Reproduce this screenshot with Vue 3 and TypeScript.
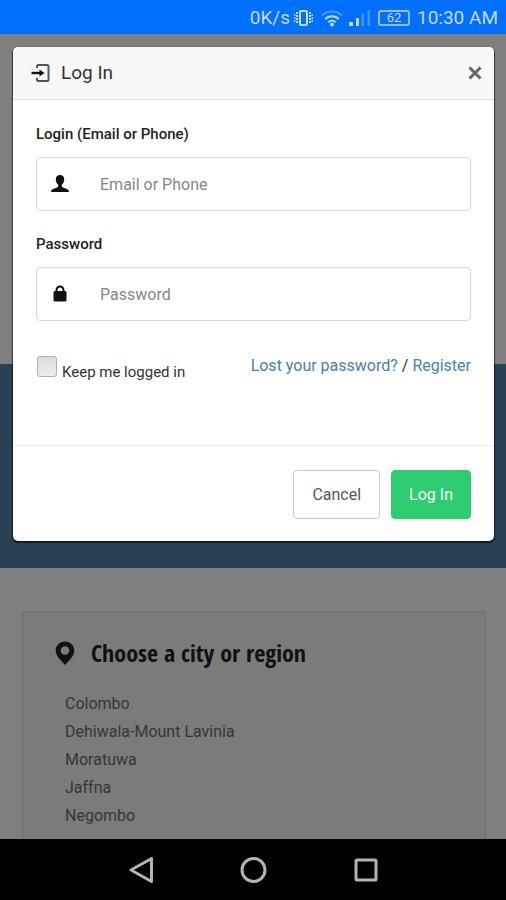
<script setup lang="ts">
import { ref } from 'vue'

const login = ref('')
const password = ref('')
const keepLoggedIn = ref(false)
const open = ref(true)

const cities: string[] = ['Colombo', 'Dehiwala-Mount Lavinia', 'Moratuwa', 'Jaffna', 'Negombo']

function close(): void {
  open.value = false
}
</script>

<template>
  <div class="screen">
    <header class="status">
      <span class="speed">0K/s</span>
      <svg class="vibrate" width="19" height="18" viewBox="0 0 19 18" aria-hidden="true">
        <rect x="6" y="2" width="7" height="14" rx="1" fill="none" stroke="currentColor" stroke-width="2" />
        <path d="M3 3v12M16 3v12" fill="none" stroke="currentColor" stroke-width="2" stroke-dasharray="2 1" />
        <path d="M.8 5v8M18.200 5v8" fill="none" stroke="currentColor" stroke-width="1.200" stroke-dasharray="2 1" />
      </svg>
      <svg class="wifi" width="22" height="18" viewBox="0 0 22 18" aria-hidden="true">
        <g fill="none" stroke="currentColor" stroke-width="2">
          <path d="M1 6.500a14.200 14.200 0 0 1 20 0" opacity=".4" />
          <path d="M4.200 10a9.600 9.600 0 0 1 13.600 0" />
          <path d="M7.400 13.200a5.100 5.100 0 0 1 7.200 0" />
        </g>
        <circle cx="11" cy="15.500" r="2" fill="currentColor" />
      </svg>
      <svg class="signal" width="22" height="18" viewBox="0 0 22 18" aria-hidden="true">
        <g fill="currentColor">
          <rect x="0" y="13" width="4" height="4" rx="1" />
          <rect x="7" y="9" width="3" height="8" />
          <rect x="12.500" y="4.500" width="2.500" height="12.500" opacity=".35" />
          <rect x="18.500" y="1" width="2.500" height="16" opacity=".35" />
        </g>
      </svg>
      <span class="battery">62</span>
      <span class="clock">10:30 AM</span>
    </header>

    <main class="content">
      <div class="page">
        <div class="hero"></div>
        <section class="region">
          <h2 class="region-title">
            <svg width="20" height="24" viewBox="0 0 20 24" aria-hidden="true">
              <path fill="currentColor" fill-rule="evenodd" d="M10 .5C4.600.5.700 4.500.700 9.500c0 4 2.300 6.500 4.900 9.700L10 24l4.400-4.800c2.600-3.200 4.900-5.700 4.900-9.700C19.300 4.500 15.400.5 10 .5zM10 5.200a4.300 4.300 0 1 1 0 8.600 4.300 4.300 0 0 1 0-8.600z" />
            </svg>
            Choose a city or region
          </h2>
          <ul class="cities">
            <li v-for="city in cities" :key="city"><a href="#">{{ city }}</a></li>
          </ul>
        </section>
      </div>

      <div v-if="open" class="overlay">
        <form class="modal" role="dialog" aria-labelledby="modal-title" @submit.prevent="close">
          <div class="modal-head">
            <svg width="20" height="20" viewBox="0 0 20 20" aria-hidden="true">
              <path d="M6 5V3.500Q6 2 7.500 2H16q1.500 0 1.500 1.500v13q0 1.500-1.500 1.500H7.500Q6 18 6 16.500V15" fill="none" stroke="#555" stroke-width="2" />
              <path d="M.5 10h10" fill="none" stroke="#111" stroke-width="2.400" />
              <path d="M8.500 6.500l5 3.500-5 3.500z" fill="#111" />
            </svg>
            <h1 id="modal-title">Log In</h1>
            <button type="button" class="close" aria-label="Close" @click="close">
              <svg width="14" height="14" viewBox="0 0 14 14" aria-hidden="true">
                <path d="M1.500 1.500l11 11M12.500 1.500l-11 11" fill="none" stroke="currentColor" stroke-width="3" />
              </svg>
            </button>
          </div>

          <div class="modal-body">
            <label class="label" for="login">Login (Email or Phone)</label>
            <div class="field">
              <svg width="18" height="18" viewBox="0 0 18 18" aria-hidden="true">
                <path fill="currentColor" d="M9 0c2.700 0 4.200 1.700 4.200 4.200 0 2.300-.9 4.300-2.400 5.600v1.600c.5 1.100 4.700 1.900 6 3.200.8.700 1.200 1.400 1.200 2.400H0c0-1 .4-1.700 1.200-2.400 1.300-1.300 5.500-2.100 6-3.200V9.800C5.700 8.500 4.800 6.500 4.800 4.200 4.800 1.700 6.300 0 9 0z" />
              </svg>
              <input id="login" v-model="login" type="text" placeholder="Email or Phone" />
            </div>

            <label class="label" for="password">Password</label>
            <div class="field">
              <svg width="18" height="18" viewBox="0 0 18 18" aria-hidden="true">
                <path d="M5.500 9V5a3.500 3.500 0 0 1 7 0V9" fill="none" stroke="currentColor" stroke-width="2" />
                <rect x="2.500" y="6" width="13" height="10.500" rx="1.500" fill="currentColor" />
              </svg>
              <input id="password" v-model="password" type="password" placeholder="Password" />
            </div>

            <div class="options">
              <label class="keep">
                <input v-model="keepLoggedIn" type="checkbox" />
                <span>Keep me logged in</span>
              </label>
              <p class="links"><a href="#">Lost your password?</a> / <a href="#">Register</a></p>
            </div>
          </div>

          <div class="modal-foot">
            <button type="button" class="btn" @click="close">Cancel</button>
            <button type="submit" class="btn primary">Log In</button>
          </div>
        </form>
      </div>
    </main>

    <nav class="navbar" aria-label="System">
      <button type="button" aria-label="Back">
        <svg width="28" height="28" viewBox="0 0 28 28"><path d="M24.500 2.500v23L4 14z" /></svg>
      </button>
      <button type="button" aria-label="Home">
        <svg width="28" height="28" viewBox="0 0 28 28"><circle cx="14.500" cy="14" r="11.500" /></svg>
      </button>
      <button type="button" aria-label="Recent apps">
        <svg width="28" height="28" viewBox="0 0 28 28"><rect x="5" y="4" width="20" height="20" rx="1" /></svg>
      </button>
    </nav>
  </div>
</template>

<style>
body {
  background: #000;
}
</style>

<style scoped>
.screen {
  display: flex;
  flex-direction: column;
  height: 100vh;
  font-family: Roboto, "Liberation Sans", sans-serif;
  font-size: 16px;
  line-height: 24px;
  color: #333;
}

.screen * {
  box-sizing: border-box;
}

button,
input {
  font: inherit;
}

a {
  text-decoration: none;
}

.status {
  display: flex;
  align-items: center;
  justify-content: flex-end;
  height: 34px;
  padding: 2px 8px 0;
  background: #0070ff;
  color: #c4dcff;
  font-size: 19px;
}

.vibrate {
  margin-left: 4px;
}

.wifi {
  margin-left: 8px;
}

.signal {
  margin-left: 6px;
}

.battery {
  width: 32px;
  height: 16px;
  margin-left: 7px;
  border: 2px solid #94bfff;
  border-radius: 3px;
  font-size: 13px;
  line-height: 12px;
  text-align: center;
}

.clock {
  margin-left: 7px;
}

.content {
  position: relative;
  flex: 1;
  min-height: 0;
  overflow: hidden;
  background: #fff;
}

.page {
  padding-top: 330px;
}

.hero {
  height: 204px;
  background: #5480a6;
}

.region {
  margin: 43px 20px 0 22px;
  padding: 25px 32px 40px;
  border: 1px solid #dedede;
  border-radius: 3px;
  background: #f7f7f7;
}

.region-title {
  display: flex;
  align-items: center;
  gap: 16px;
  margin: 0 0 21px;
  color: #222;
  font-family: "Open Sans Condensed", "Roboto Condensed", "Liberation Sans Narrow", sans-serif;
  font-size: 24px;
  line-height: 32px;
  font-weight: 700;
}

.cities {
  margin: 0;
  padding: 0 0 0 10px;
  list-style: none;
  line-height: 28px;
}

.cities a {
  color: #6c6c6c;
}

.overlay {
  position: absolute;
  inset: 0;
  padding: 13px 12px 0 13px;
  background: rgba(0, 0, 0, 0.5);
}

.modal {
  border-radius: 5px;
  background: #fff;
  box-shadow: 0 1px 1px 1px rgba(0, 0, 20, 0.6);
}

.modal-head {
  display: flex;
  align-items: center;
  gap: 10px;
  height: 53px;
  padding: 0 12px 0 18px;
  border-bottom: 1px solid #ddd;
  border-radius: 5px 5px 0 0;
  background: #f7f7f7;
}

.modal-head h1 {
  flex: 1;
  margin: 0;
  font-size: 19px;
  font-weight: 400;
}

.close {
  display: flex;
  padding: 0;
  border: 0;
  background: none;
  color: #666;
}

.modal-body {
  padding: 22px 23px 61px;
}

.label {
  display: block;
  color: #222;
  font-size: 15px;
  font-weight: 500;
}

.field {
  display: flex;
  align-items: center;
  height: 54px;
  margin: 11px 0 21px;
  padding: 0 14px;
  border: 1px solid #d8d8d8;
  border-radius: 4px;
  color: #111;
}

.field input {
  flex: 1;
  min-width: 0;
  height: 100%;
  margin-left: 31px;
  padding: 0;
  border: 0;
  outline: 0;
  background: none;
  color: #333;
}

.field input::placeholder {
  color: #868686;
}

.options {
  display: flex;
  justify-content: space-between;
  padding-top: 12px;
}

.keep {
  display: flex;
  gap: 5px;
  padding-top: 2px;
  font-size: 15px;
}

.keep input {
  appearance: none;
  width: 20px;
  height: 21px;
  margin: 0 0 0 1px;
  border: 1px solid #b0b0b0;
  border-radius: 3px;
  background: linear-gradient(#dcdcdc, #ececec);
}

.keep input:checked {
  background: #4a80b5;
}

.keep span {
  padding-top: 4px;
}

.links {
  margin: 0;
}

.links a {
  color: #4680b8;
}

.modal-foot {
  display: flex;
  justify-content: flex-end;
  gap: 11px;
  padding: 24px 23px 22px;
  border-top: 1px solid #e8edef;
}

.btn {
  height: 49px;
  padding: 0 18px;
  border: 1px solid #ccc;
  border-radius: 4px;
  background: #fff;
  color: #555;
}

.primary {
  padding: 0 17px;
  border-color: #2ecc71;
  background: #2ecc71;
  color: #fff;
}

.navbar {
  display: flex;
  align-items: center;
  justify-content: center;
  gap: 84px;
  height: 61px;
  background: #000;
}

.navbar button {
  display: flex;
  padding: 0;
  border: 0;
  background: none;
}

.navbar svg {
  fill: none;
  stroke: #b4b4b4;
  stroke-width: 3;
  stroke-linejoin: round;
}
</style>
